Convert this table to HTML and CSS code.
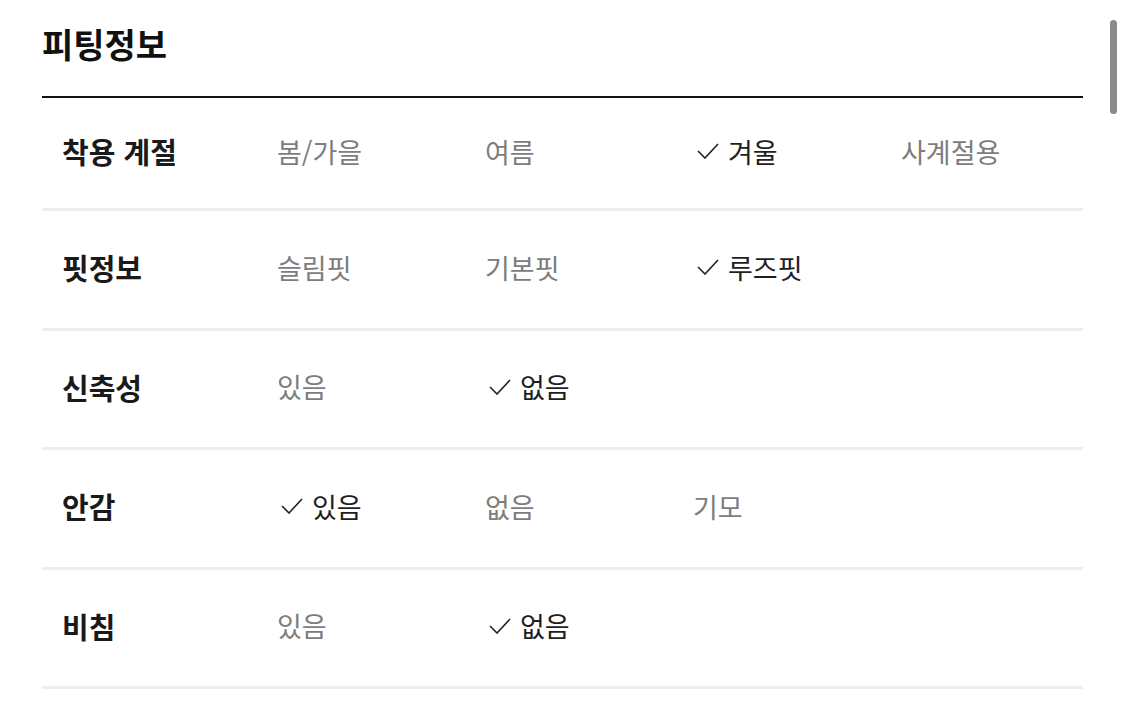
FILE: index.html
```html
<!DOCTYPE html>
<html lang="ko">
<head>
<meta charset="utf-8">
<title>피팅정보</title>
<link rel="stylesheet" href="styles.css">
</head>
<body>
<div class="page">
  <h2 class="title">피팅정보</h2>
  <div class="table">
    <div class="row first">
      <div class="label">착용 계절</div>
      <div class="opts">
        <span class="opt">봄/가을</span>
        <span class="opt">여름</span>
        <span class="opt on"><svg class="chk" viewBox="0 0 22 16"><polyline points="1,8 8,15 21,1"/></svg>겨울</span>
        <span class="opt">사계절용</span>
      </div>
    </div>
    <div class="row">
      <div class="label">핏정보</div>
      <div class="opts">
        <span class="opt">슬림핏</span>
        <span class="opt">기본핏</span>
        <span class="opt on"><svg class="chk" viewBox="0 0 22 16"><polyline points="1,8 8,15 21,1"/></svg>루즈핏</span>
      </div>
    </div>
    <div class="row">
      <div class="label">신축성</div>
      <div class="opts">
        <span class="opt">있음</span>
        <span class="opt on"><svg class="chk" viewBox="0 0 22 16"><polyline points="1,8 8,15 21,1"/></svg>없음</span>
      </div>
    </div>
    <div class="row">
      <div class="label">안감</div>
      <div class="opts">
        <span class="opt on"><svg class="chk" viewBox="0 0 22 16"><polyline points="1,8 8,15 21,1"/></svg>있음</span>
        <span class="opt">없음</span>
        <span class="opt">기모</span>
      </div>
    </div>
    <div class="row">
      <div class="label">비침</div>
      <div class="opts">
        <span class="opt">있음</span>
        <span class="opt on"><svg class="chk" viewBox="0 0 22 16"><polyline points="1,8 8,15 21,1"/></svg>없음</span>
      </div>
    </div>
  </div>
</div>
<div class="scrollbar"></div>
</body>
</html>
```

FILE: styles.css
```css
html, body {
  margin: 0;
  padding: 0;
  background: #fff;
}
body {
  font-family: "Noto Sans CJK KR", "Noto Sans", sans-serif;
  color: #1a1a1a;
  overflow: hidden;
}
.page {
  width: 1041px;
  margin-left: 42px;
}
.title {
  margin: 0;
  height: 98px;
  box-sizing: border-box;
  padding-top: 19px;
  font-size: 34px;
  line-height: 50px;
  font-weight: 700;
  color: #111;
  border-bottom: 2px solid #111;
}
.row {
  display: flex;
  align-items: center;
  height: 119.5px;
  box-sizing: border-box;
  padding-bottom: 4px;
  border-bottom: 3px solid #eeeeee;
}
.row.first {
  height: 113px;
}
.label {
  flex: none;
  width: 235px;
  box-sizing: border-box;
  padding-left: 20px;
  font-size: 29px;
  font-weight: 700;
  color: #1a1a1a;
}
.opts {
  display: flex;
  flex: none;
}
.opt {
  flex: none;
  width: 208px;
  display: flex;
  align-items: center;
  font-size: 27px;
  color: #7d7d7d;
}
.opt.on {
  color: #1e1e1e;
  padding-left: 4px;
  width: 204px;
}
.chk {
  flex: none;
  width: 22px;
  height: 16px;
  margin-right: 9px;
  fill: none;
  stroke: #222;
  stroke-width: 1.6;
}
.scrollbar {
  position: fixed;
  top: 20px;
  left: 1110px;
  width: 7px;
  height: 94px;
  border-radius: 4px;
  background: #8a8a8a;
}
```
